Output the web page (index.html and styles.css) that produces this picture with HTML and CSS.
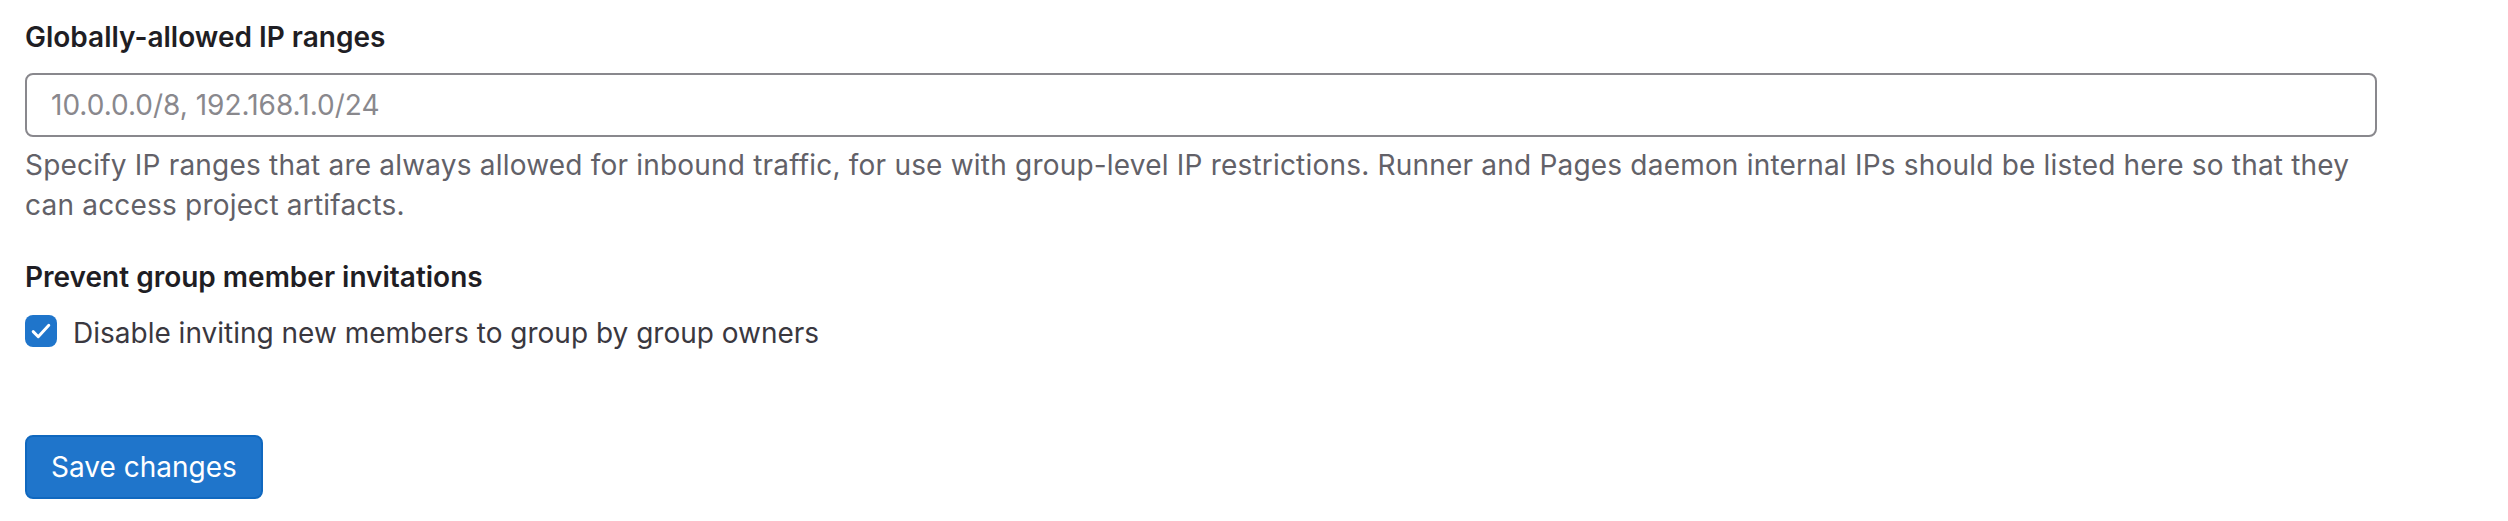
FILE: index.html
```html
<!DOCTYPE html>
<html lang="en">
<head>
  <meta charset="UTF-8">
  <meta name="viewport" content="width=device-width,initial-scale=1.0">
  <title>Sign-up restrictions</title>
  <link rel="stylesheet" href="styles.css">
</head>
<body>
  <form class="settings-form">
    <!-- IP ranges -->
    <div class="form-group">
      <label class="form-label" for="allowed-ips">Globally-allowed IP ranges</label>
      <input id="allowed-ips" class="form-input" type="text" placeholder="10.0.0.0/8, 192.168.1.0/24">
      <p class="form-text">Specify IP ranges that are always allowed for inbound traffic, for use with group-level IP restrictions. Runner and Pages daemon internal IPs should be listed here so that they can access project artifacts.</p>
    </div>

    <!-- invitations -->
    <div class="form-group">
      <div class="form-label">Prevent group member invitations</div>
      <label class="check-row">
        <span class="check-box">
          <svg viewBox="0 0 16 16" width="26" height="26" aria-hidden="true">
            <path d="M3.2 8.4l3.1 3.1 6.5-7" fill="none" stroke="#fff" stroke-width="1.8" stroke-linecap="round" stroke-linejoin="round"/>
          </svg>
        </span>
        <span class="check-text">Disable inviting new members to group by group owners</span>
      </label>
    </div>

    <div class="form-actions">
      <button type="button" class="btn-confirm">Save changes</button>
    </div>
  </form>
</body>
</html>
```

FILE: styles.css
```css
/* reset */
* {
  margin: 0;
  padding: 0;
  box-sizing: border-box;
}
body {
  font-family: Inter, "Noto Sans", sans-serif;
  font-size: 28px;
  line-height: 40px;
  color: #3a383f;
  background-color: #fff;
}

.settings-form {
  width: 2402px;
  padding: 17px 25px;
}

.form-group {
  margin-bottom: 32px;
}

.form-label {
  display: block;
  font-weight: 600;
  color: #1f1e24;
  margin-bottom: 16px;
}

.form-input {
  display: block;
  width: 100%;
  height: 64px;
  padding: 16px 24px;
  font-family: inherit;
  font-size: 28px;
  line-height: 32px;
  color: #3a383f;
  border: 2px solid #89888d;
  border-radius: 8px;
  background-color: #fff;
}
.form-input::placeholder {
  color: #89888d;
}

.form-text {
  margin-top: 8px;
  color: #626168;
  letter-spacing: 0.2px;
}

/* checkbox */
.check-row {
  display: flex;
  align-items: flex-start;
  gap: 16px;
}
.check-box {
  flex: none;
  width: 32px;
  height: 32px;
  margin-top: 2px;
  border-radius: 8px;
  background-color: #1f75cb;
  display: flex;
  align-items: center;
  justify-content: center;
}

/* buttons */
.form-actions {
  margin-top: 82px;
}
.btn-confirm {
  height: 64px;
  padding: 0 24px;
  font-family: inherit;
  font-size: 28px;
  color: #fff;
  background-color: #1f75cb;
  border: 2px solid #1068bf;
  border-radius: 8px;
  cursor: pointer;
}
.btn-confirm:hover {
  background-color: #1068bf;
}
```
